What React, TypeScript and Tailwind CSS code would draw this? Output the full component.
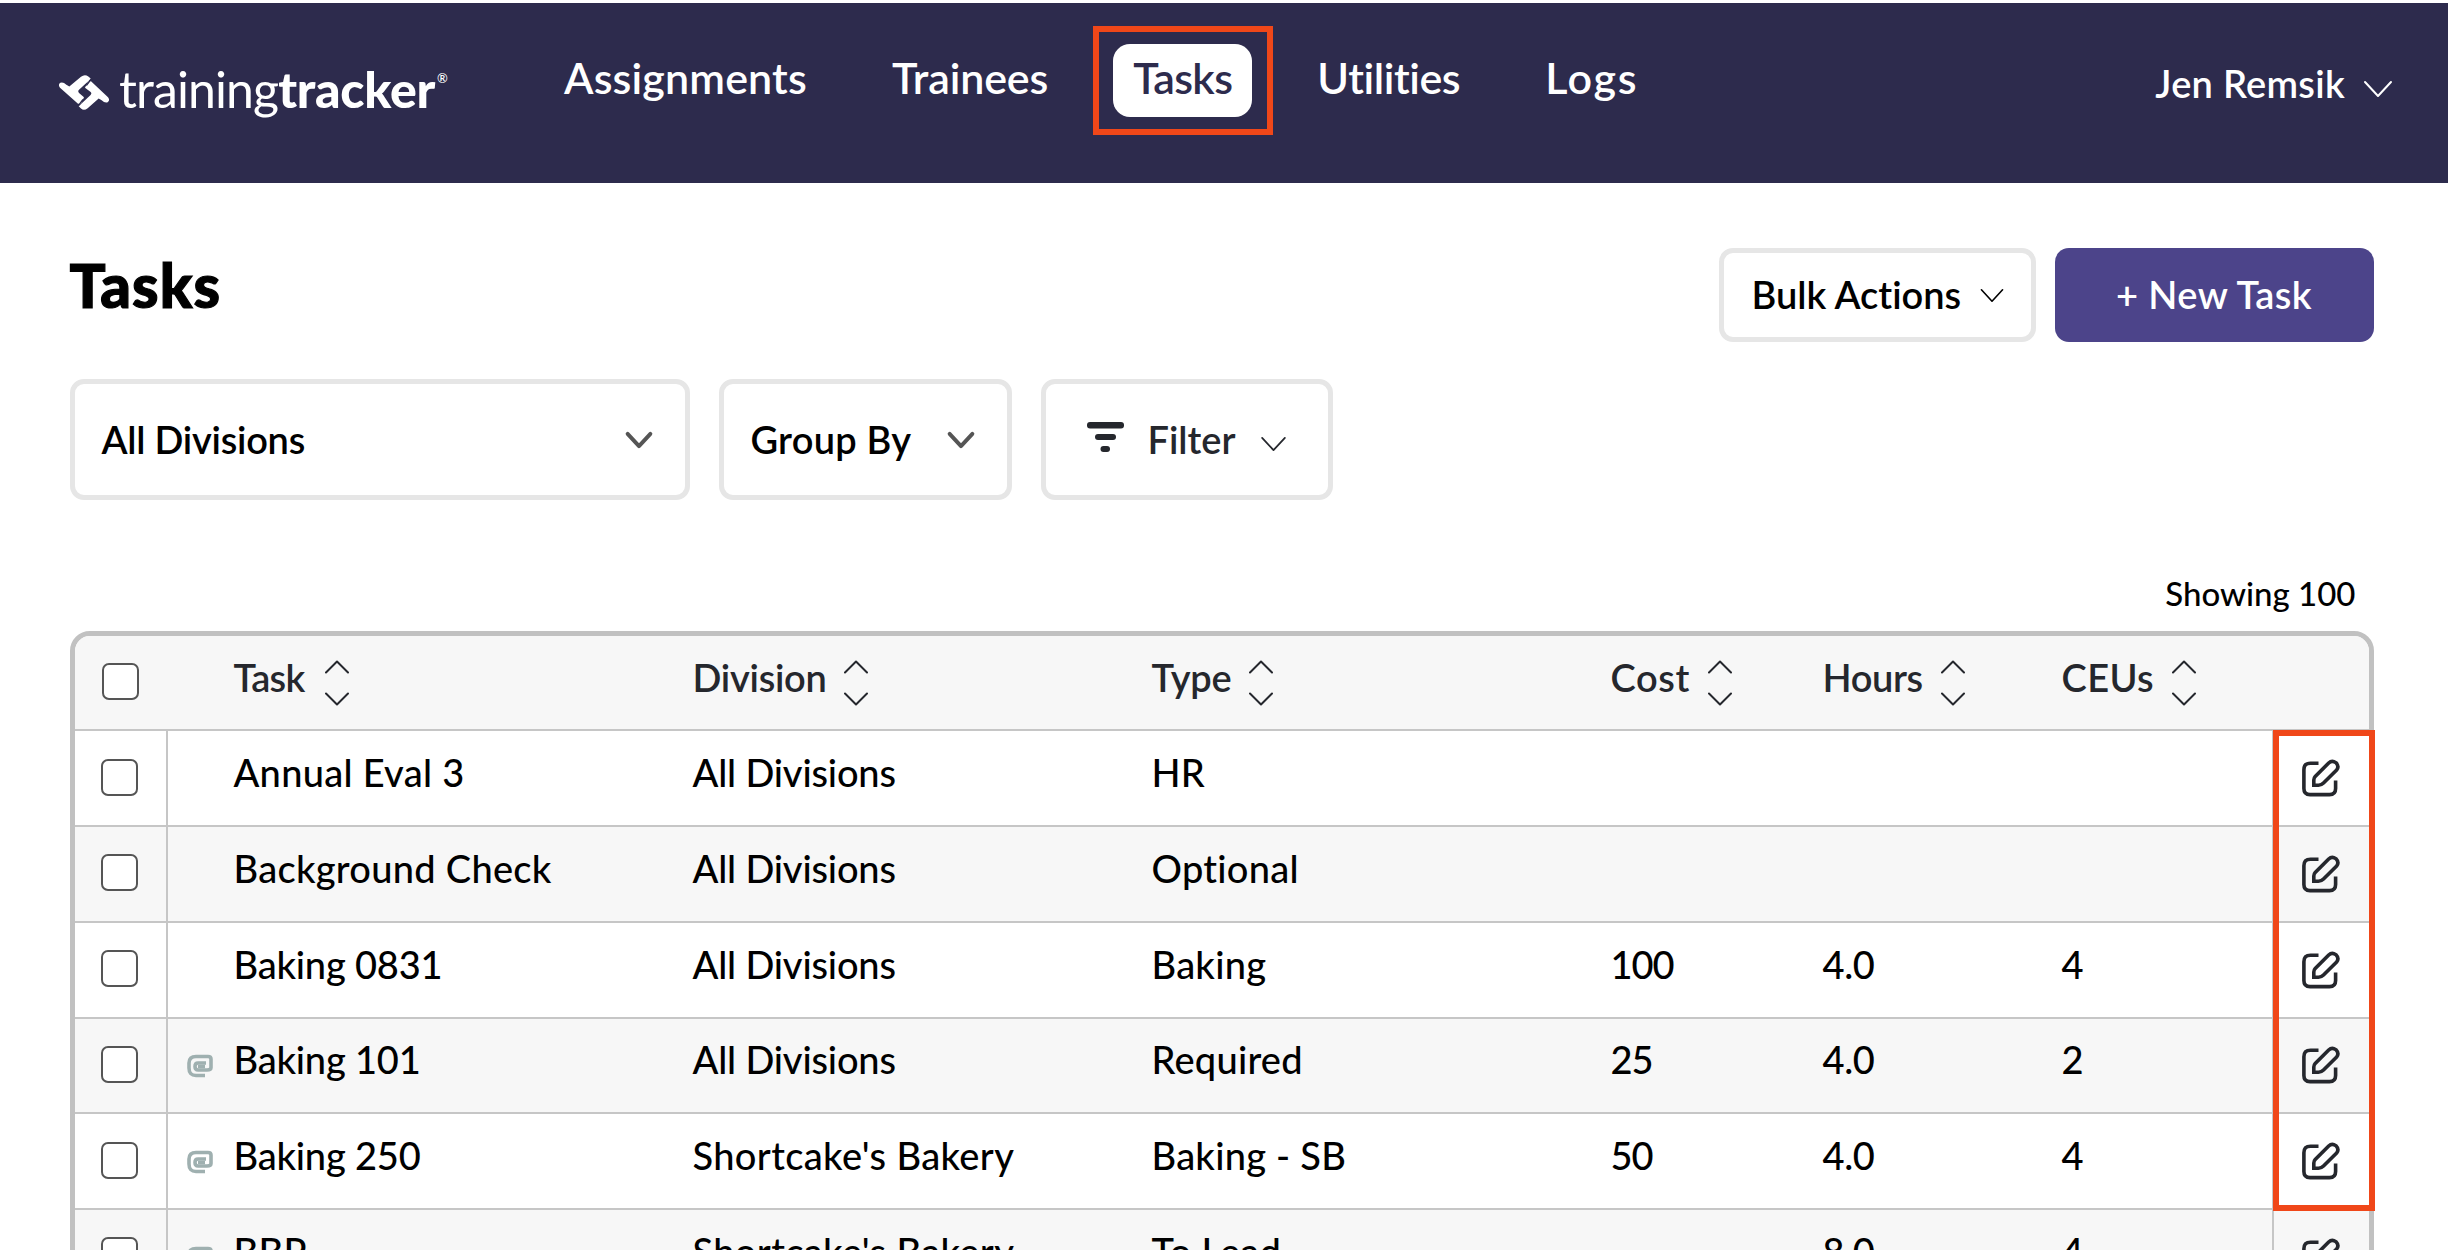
import clsx from 'clsx'

interface Task {
  name: string
  division: string
  type: string
  cost?: string
  hours?: string
  ceus?: string
  attachment?: boolean
}

const navItems = [
  { label: 'Assignments', className: 'tracking-[0.15px]' },
  { label: 'Trainees', className: 'tracking-[-0.15px]' },
  { label: 'Tasks', className: 'tracking-[-0.65px]', active: true },
  { label: 'Utilities', className: 'tracking-[-0.43px]' },
  { label: 'Logs', className: 'tracking-[1.6px]' },
]

const columns = [
  { label: 'Task', className: 'tracking-[-0.7px]', gap: 'gap-[20px]' },
  { label: 'Division', className: 'tracking-[-0.27px]', gap: 'gap-[17px]' },
  { label: 'Type', className: 'tracking-[-0.22px]', gap: 'gap-[18px]' },
  { label: 'Cost', className: 'tracking-[0.6px]', gap: 'gap-[18px]' },
  { label: 'Hours', className: 'tracking-[-0.38px]', gap: 'gap-[18px]' },
  { label: 'CEUs', className: 'tracking-[0.4px]', gap: 'gap-[18px]' },
]

const tasks: Task[] = [
  { name: 'Annual Eval 3', division: 'All Divisions', type: 'HR' },
  { name: 'Background Check', division: 'All Divisions', type: 'Optional' },
  { name: 'Baking 0831', division: 'All Divisions', type: 'Baking', cost: '100', hours: '4.0', ceus: '4' },
  { name: 'Baking 101', division: 'All Divisions', type: 'Required', cost: '25', hours: '4.0', ceus: '2', attachment: true },
  { name: 'Baking 250', division: "Shortcake's Bakery", type: 'Baking - SB', cost: '50', hours: '4.0', ceus: '4', attachment: true },
  { name: 'BBP', division: "Shortcake's Bakery", type: 'To Lead', hours: '8.0', ceus: '4', attachment: true },
]

const gridCols =
  'grid grid-cols-[93px_66px_459px_459px_459px_212px_239px_210px_1fr]'

function Chevron({ className, stroke = 2 }: { className?: string; stroke?: number }) {
  return (
    <svg
      viewBox="0 0 28 16"
      fill="none"
      stroke="currentColor"
      strokeWidth={stroke}
      strokeLinecap="round"
      strokeLinejoin="round"
      className={clsx('shrink-0 overflow-visible', className)}
    >
      <path d="M1 1l13 14L27 1" />
    </svg>
  )
}

function SortIcon() {
  return (
    <svg
      viewBox="0 0 24 46"
      fill="none"
      stroke="currentColor"
      strokeWidth="2"
      strokeLinecap="round"
      strokeLinejoin="round"
      className="mt-[1px] h-[46px] w-6 shrink-0"
    >
      <path d="M1 12.5L12 1.5l11 11M1 33.5l11 11 11-11" />
    </svg>
  )
}

function LogoMark() {
  return (
    <svg viewBox="0 0 150 104" className="h-[35px] w-[50px]" fill="#fff">
      <path d="M3 38Q-4 28 4 23Q12 19 22 29L31 34L66 5Q77 -4 88 4L96 11L60 44Q55 49 61 54L75 66L66 86L57 86Z" />
      <path d="M147 66Q154 76 146 81Q138 85 128 75L119 70L86 99Q75 108 66 100L59 93L94 60Q100 55 94 50L78 38L88 18L96 18Z" />
      <path d="M100 7L82 31M72 73L57 93" stroke="#2d2b4d" strokeWidth="4" />
    </svg>
  )
}

function PaperclipIcon() {
  return (
    <svg
      viewBox="0 0 26 24"
      fill="none"
      stroke="#9fb0b0"
      strokeWidth="3.6"
      className="mt-[2px] h-6 w-[26px]"
    >
      <path d="M18 21.500H9Q2 21.500 2 14V9Q2 2.500 9 2.500h12Q24 2.500 24 5v8.500q0 2.500-4 2.500H11Q8 16 8 12.500Q8 9 11 9H19" />
      <path d="M11 12.500H18" />
    </svg>
  )
}

function EditIcon() {
  return (
    <svg
      viewBox="0 0 38 38"
      fill="none"
      stroke="#25272d"
      strokeWidth="3.6"
      className="size-[38px]"
    >
      <path d="M16.500 4.200H8.500Q1.900 4.200 1.900 10.800V29.500Q1.900 35.600 8 35.600H27.500Q33.600 35.600 33.600 29.500V21.500" />
      <path d="M11.800 26.200V21Q11.800 19 13.200 17.500L26.700 4Q30 .8 33.800 3.600Q37.600 7.500 34.600 11L21.500 24Q19.300 26.200 16.500 26.200Z" />
    </svg>
  )
}

function Checkbox({ className }: { className?: string }) {
  return (
    <span
      role="checkbox"
      aria-checked="false"
      className={clsx('block size-[37px] rounded-[7px] border-2 border-[#555] bg-white', className)}
    />
  )
}

export default function App() {
  return (
    <div className="h-[1250px] w-[2448px] overflow-hidden bg-white pt-[3px] font-['Lato',sans-serif] text-[38px] leading-none font-semibold whitespace-nowrap text-black [font-variant-ligatures:none]">
      <header className="flex h-[180px] items-start bg-[#2d2b4d] pr-[56px] pl-[59px] text-white">
        <div className="mt-[61px] flex w-[485px] items-center text-[50px]">
          <LogoMark />
          <span className="ml-[10px] pb-[7px] font-normal tracking-[-0.9px]">training</span>
          <span className="pb-[7px] font-black tracking-[-0.3px]">tracker</span>
          <span className="mb-[28px] ml-[2px] text-[13px] font-medium">®</span>
        </div>

        <nav className="mt-[41px] flex gap-[45px] text-[43px]">
          {navItems.map((item) => (
            <a
              key={item.label}
              className={clsx(
                'relative flex h-[73px] items-center rounded-[17px] px-5 pb-[6px]',
                item.active && 'bg-white text-[#2d2b4d]',
                item.className,
              )}
            >
              {item.label}
              {item.active && (
                <span className="absolute -top-[18px] -right-[21px] -bottom-[18px] -left-[20px] border-[6px] border-[#f04719]" />
              )}
            </a>
          ))}
        </nav>

        <div className="mt-[61px] ml-auto flex items-center gap-[19px]">
          <span className="tracking-[0.27px]">Jen Remsik</span>
          <Chevron className="mt-[12px] h-4 w-7" />
        </div>
      </header>

      <main className="pr-[74.500px] pl-[69.500px]">
        <div className="flex h-[159px] items-end justify-between">
          <h1 className="mb-[27px] text-[60px] font-black tracking-[1.1px] [-webkit-text-stroke:1.2px_black]">
            Tasks
          </h1>
          <div className="flex gap-[19px]">
            <button className="flex h-[94px] w-[317px] items-center gap-[19px] rounded-[14px] border-[5px] border-[#e6e6e6] pl-[28px]">
              <span className="pb-[2px]">Bulk Actions</span>
              <Chevron className="h-[13px] w-6" />
            </button>
            <button className="h-[94px] w-[319px] rounded-[14px] bg-[#4c448a] pb-[2px] tracking-[0.45px] text-white">
              + New Task
            </button>
          </div>
        </div>

        <div className="mt-[37px] flex gap-[29px]">
          <div className="flex h-[121px] w-[620px] items-center justify-between rounded-[14px] border-[5px] border-[#e6e6e6] pr-[33px] pl-[27px]">
            <span className="pb-[2px] tracking-[-0.25px]">All Divisions</span>
            <Chevron className="h-[14px] w-[26px] text-[#555]" stroke={4.5} />
          </div>
          <div className="flex h-[121px] w-[293px] items-center justify-between rounded-[14px] border-[5px] border-[#e6e6e6] pr-[33px] pl-[27px]">
            <span className="pb-[2px] tracking-[0.24px]">Group By</span>
            <Chevron className="h-[14px] w-[26px] text-[#555]" stroke={4.5} />
          </div>
          <div className="flex h-[121px] w-[292px] items-center rounded-[14px] border-[5px] border-[#e6e6e6] pl-[41px] text-[#25272d]">
            <svg viewBox="0 0 37 30" fill="currentColor" className="mb-[6px] h-[30px] w-[37px]">
              <rect width="37" height="6.5" rx="3" />
              <rect x="8" y="12" width="21" height="6" rx="3" />
              <rect x="13.5" y="24" width="9.500" height="6" rx="3" />
            </svg>
            <span className="ml-[24px] pb-[2px]">Filter</span>
            <Chevron className="mt-[9px] ml-[24px] h-[14px] w-[27px]" />
          </div>
        </div>

        <p className="mt-[77px] mb-[21px] pr-[18px] text-right text-[33px] font-medium">
          Showing 100
        </p>

        <div className="relative rounded-t-[20px] border-[5px] border-[#c1c1c1]">
          <div
            className={clsx(
              gridCols,
              'h-[95.3px] items-center rounded-t-[15px] border-b-2 border-[#c6c6c6] bg-[#f7f7f7] text-[#25272d]',
            )}
          >
            <Checkbox className="mb-[3px] ml-[27px]" />
            <span />
            {columns.map((col) => (
              <div key={col.label} className={clsx('flex items-center', col.gap)}>
                <span className={clsx('pb-3', col.className)}>{col.label}</span>
                <SortIcon />
              </div>
            ))}
          </div>

          {tasks.map((task) => (
            <div
              key={task.name}
              className={clsx(
                gridCols,
                'h-[95.75px] items-center border-b-2 border-[#c6c6c6] font-medium odd:bg-[#f7f7f7]',
              )}
            >
              <div className="flex h-full items-center border-r-2 border-[#c6c6c6] pl-[26px]">
                <Checkbox className="mb-[2px]" />
              </div>
              <div className="pl-[19px]">{task.attachment && <PaperclipIcon />}</div>
              <span
                className={clsx(
                  'pb-3',
                  /\d{3}/.test(task.name) ? 'tracking-[-0.2px]' : 'tracking-[0.28px]',
                )}
              >
                {task.name}
              </span>
              <span
                className={clsx(
                  'pb-3',
                  task.division === 'All Divisions' ? 'tracking-[-0.17px]' : 'tracking-[0.37px]',
                )}
              >
                {task.division}
              </span>
              <span className="pb-3 tracking-[0.25px]">{task.type}</span>
              <span className="pb-3 tracking-[-1px]">{task.cost}</span>
              <span className="pb-3 tracking-[-0.4px]">{task.hours}</span>
              <span className="pb-3">{task.ceus}</span>
              <div className="flex h-full items-center border-l-2 border-[#c6c6c6] pl-[28px]">
                <EditIcon />
              </div>
            </div>
          ))}

          {/* Highlight around the edit buttons */}
          <div className="absolute top-[94px] -right-[6px] h-[481px] w-[102px] border-[6px] border-[#f04719]" />
        </div>
      </main>
    </div>
  )
}
